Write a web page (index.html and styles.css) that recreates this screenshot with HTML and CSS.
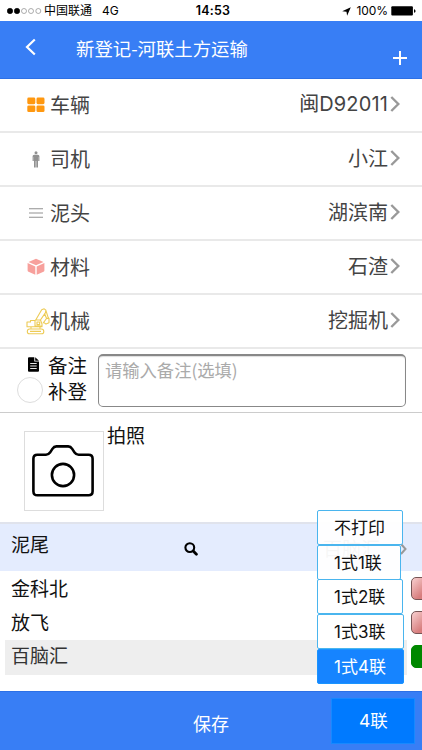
FILE: index.html
```html
<!DOCTYPE html>
<html lang="zh-CN">
<head>
<meta charset="utf-8">
<title>新登记</title>
<link rel="stylesheet" href="styles.css">
</head>
<body>
<div class="app">
  <div class="status">
    <div class="carrier">
      <svg class="dots" width="35" height="8" viewBox="0 0 35 8"><g stroke="#000" stroke-width=".6"><circle cx="3" cy="4" r="2.7"/><circle cx="10" cy="4" r="2.7"/><g fill="none" stroke="#777"><circle cx="17" cy="4" r="2.5"/><circle cx="24" cy="4" r="2.5"/><circle cx="31.3" cy="4" r="2.5"/></g></g></svg>
      <span class="carrier-name">中国联通</span><span class="network">4G</span>
    </div>
    <div class="clock">14:53</div>
    <div class="power">
      <svg class="locate" width="9" height="9" viewBox="0 0 9 9"><path d="M8.8.2 5.1 8.8 4.5 4.7.2 4.2z"/></svg>
      <span class="percent">100%</span>
      <svg width="25" height="10" viewBox="0 0 25 10"><rect x=".3" y=".3" width="21.6" height="9.2" rx="1"/><path d="M23 3.2c2 .3 2 3.3 0 3.6z"/></svg>
    </div>
  </div>
  <header class="header">
    <svg class="back" width="12" height="18" viewBox="0 0 12 18"><path d="M9.8 1.5 2 9l7.8 7.5" fill="none" stroke="#fff" stroke-width="2.2"/></svg>
    <h1 class="title">新登记-河联土方运输</h1>
    <svg class="add" width="14" height="14" viewBox="0 0 14 14"><path d="M7 0v14M0 7h14" stroke="#fff" stroke-width="2"/></svg>
  </header>

  <div class="row">
    <span class="icon"><svg width="18" height="16" viewBox="0 0 18 16" fill="#ff9810"><rect x=".3" y=".5" width="8" height="6.7" rx="1.4"/><rect x="9.5" y=".5" width="8" height="6.7" rx="1.4"/><rect x=".3" y="8.4" width="8" height="6.7" rx="1.4"/><rect x="9.5" y="8.4" width="8" height="6.7" rx="1.4"/></svg></span>
    <span class="label">车辆</span><span class="value">闽<span class="plate">D92011</span></span>
    <svg class="chevron" width="10" height="18" viewBox="0 0 10 18"><path d="m1.3 2 7 7-7 7"/></svg>
  </div>
  <div class="row">
    <span class="icon"><svg width="8" height="17" viewBox="0 0 8 17" fill="#919191"><circle cx="4" cy="1.7" r="1.5"/><path d="M2.1 3.7h3.8Q7.4 3.8 7.4 5.3V10H6.2V6H6v10.5H4.3V10h-.6v6.5H2V6h-.2v4H.6V5.3Q.6 3.8 2.1 3.7z"/></svg></span>
    <span class="label">司机</span><span class="value">小江</span>
    <svg class="chevron" width="10" height="18" viewBox="0 0 10 18"><path d="m1.3 2 7 7-7 7"/></svg>
  </div>
  <div class="row">
    <span class="icon"><svg width="14" height="12" viewBox="0 0 14 12"><path d="M0 1.7h14M0 6h14M0 10.3h14" stroke="#919191" stroke-width="1.1"/></svg></span>
    <span class="label">泥头</span><span class="value">湖滨南</span>
    <svg class="chevron" width="10" height="18" viewBox="0 0 10 18"><path d="m1.3 2 7 7-7 7"/></svg>
  </div>
  <div class="row">
    <span class="icon"><svg width="18" height="18" viewBox="0 0 18 18" fill="#f7a09c"><path d="m9 .8 7.5 3.1L9 7.3 1.5 3.9zM.6 5 8.3 8.5v8.2L1.5 13.7Q.6 13.3.6 12.4zM17.4 5 9.7 8.5v8.2l6.8-3q.9-.4.9-1.3z"/></svg></span>
    <span class="label">材料</span><span class="value">石渣</span>
    <svg class="chevron" width="10" height="18" viewBox="0 0 10 18"><path d="m1.3 2 7 7-7 7"/></svg>
  </div>
  <div class="row">
    <span class="icon digger"><svg width="24" height="27" viewBox="0 0 24 27" fill="none" stroke="#edcb55" stroke-width="1.1" stroke-linejoin="round"><rect x="1.3" y="21" width="16.5" height="4.8" rx="2.4"/><path d="M4 23.4h11M5 18.8v2M14 18.8v2M1 14h3.5v-1.5H9V18h7v.8H1zM9 12h5.5l1.5 4v2.5M11 14h2.7v2.6H11zM10 11.5l5.7-9.7 2.5-1 1.7 1.4-.4 2.4-5.6 8.2M19.8 2.2l2.7 8.5M18.4 5.3l2.3 5.5M20.5 10.5l2.5-.3v4.5l-3 1.4q-1.5-1.3-2.7-1.3z"/></svg></span>
    <span class="label">机械</span><span class="value">挖掘机</span>
    <svg class="chevron" width="10" height="18" viewBox="0 0 10 18"><path d="m1.3 2 7 7-7 7"/></svg>
  </div>

  <section class="notes">
    <div class="note-labels">
      <div class="note-line"><svg class="file" width="11" height="15" viewBox="0 0 11 15"><path d="M1 .2h5.3v4.3H11v9.3q0 1-1 1H1q-1 0-1-1V1.2Q0 .2 1 .2zM7.2.2 11 3.7H7.2z"/><path d="M2.2 6.5h6.5M2.2 9h6.5M2.2 11.5h6.5" stroke="#fff" stroke-width=".9"/></svg>备注</div>
      <div class="note-line"><span class="radio"></span>补登</div>
    </div>
    <div class="textarea">请输入备注(选填)</div>
  </section>

  <section class="photo">
    <div class="camera"><svg width="64" height="54" viewBox="0 0 64 54" fill="none" stroke="#000" stroke-width="2.6"><path d="M6.4 10.8H15q2.5 0 4-2.2l2.4-3.7q1.6-2.5 4-2.5h11.8q2.4 0 4 2.5l2.4 3.7q1.5 2.2 4 2.2h10q4 0 4 4v32.5q0 4-4 4H6.4q-4 0-4-4V14.8q0-4 4-4z"/><circle cx="32" cy="31" r="11.1"/></svg></div>
    <span>拍照</span>
  </section>

  <section class="site">
    <span class="site-label">泥尾</span>
    <svg class="search" width="14" height="14" viewBox="0 0 14 14" fill="none" stroke="#000"><circle cx="5.8" cy="5.6" r="4.4" stroke-width="2.1"/><path d="m9.2 9 3.2 3.2" stroke-width="2.8" stroke-linecap="round"/></svg>
    <span class="site-value">百脑汇</span>
    <svg class="site-arrow" width="7" height="12" viewBox="0 0 7 12"><path d="m1 1 4.5 5L1 11" fill="none" stroke="#999" stroke-width="2"/></svg>
  </section>
  <div class="list">
    <div class="item"><span>金科北</span><i class="tag"></i></div>
    <div class="item"><span>放飞</span><i class="tag"></i></div>
    <div class="item selected"><span>百脑汇</span><i class="tag on"></i></div>
  </div>

  <footer class="footer">
    <div class="save">保存</div>
    <div class="copies">4联</div>
  </footer>

  <div class="menu">
    <div class="option">不打印</div>
    <div class="option narrow">1式1联</div>
    <div class="option">1式2联</div>
    <div class="option wide">1式3联</div>
    <div class="option wide active">1式4联</div>
  </div>
</div>
</body>
</html>
```
FILE: styles.css
```css
* { box-sizing: border-box; }
body {
  margin: 0;
  background: #fff;
  color: #111;
  font-family: "Noto Sans CJK SC", sans-serif;
  font-weight: 400;
  overflow: hidden;
}
svg { display: block; flex: none; }
.app {
  position: relative;
  display: flex;
  flex-direction: column;
  width: 422px;
  height: 750px;
  overflow: hidden;
}
.status {
  display: grid;
  grid-template-columns: 1fr auto 1fr;
  align-items: center;
  height: 21px;
  flex: none;
  padding: 1px 6px 0 7px;
  color: #000;
  font: 400 12px/20px Inter, "Noto Sans CJK SC", sans-serif;
}
.carrier, .power { display: flex; align-items: center; }
.carrier-name { margin-left: 2px; }
.network { margin-left: 10px; }
.clock { font-weight: 600; font-size: 12.5px; letter-spacing: .2px; padding-left: 3px; }
.power { justify-content: flex-end; }
.locate { margin-right: 6px; }
.percent { margin-right: 3px; letter-spacing: -.1px; }
.header {
  display: flex;
  align-items: center;
  flex: none;
  height: 58px;
  padding: 0 15px 2px 25px;
  background: #387ef5;
  border-bottom: 1px solid #2c70e6;
  color: #fff;
}
.back { margin-bottom: 3px; }
.title {
  flex: 1;
  margin: 0 0 2px 39px;
  font-size: 18.4px;
  font-weight: 400;
  line-height: 26px;
}
.add { margin-top: 18px; }
.row {
  display: flex;
  align-items: center;
  flex: none;
  height: 54px;
  padding-right: 22px;
  border-bottom: 2px solid #e9e9e9;
  color: #444;
  font-size: 20px;
  line-height: 30px;
}
.icon {
  display: flex;
  justify-content: center;
  width: 18px;
  margin-left: 27px;
}
.digger { justify-content: flex-start; margin-left: 26px; width: 19px; }
.label { margin-left: 5px; }
.value { margin: 0 2px 3px auto; }
.plate { font-family: Inter, sans-serif; letter-spacing: .15px; }
.chevron { margin-bottom: 2px; fill: none; stroke: #999; stroke-width: 2.4; }
.notes {
  display: flex;
  flex: none;
  height: 64px;
  padding: 3px 16px 4px 17px;
  border-bottom: 1px solid #ccc;
}
.note-labels { width: 81px; font-size: 19.5px; }
.note-line {
  display: flex;
  align-items: center;
  justify-content: flex-end;
  height: 27px;
  margin-top: -1px;
  padding-right: 11px;
  line-height: 27px;
}
.file { margin-right: 9px; }
.radio {
  width: 26px;
  height: 26px;
  margin-right: 5px;
  margin-bottom: 1px;
  border: 1px solid #ddd;
  border-radius: 50%;
}
.textarea {
  flex: 1;
  height: 53px;
  margin-top: 2px;
  padding: 1px 6px;
  border: 1px solid #888;
  border-top: 2px solid #888;
  border-radius: 5px;
  box-shadow: inset 0 1px 1px #ddd;
  color: #aaa;
  font-size: 17.3px;
  font-weight: 400;
  line-height: 26px;
}
.photo {
  display: flex;
  flex: none;
  height: 109px;
  padding: 8px 0 0 24px;
  font-size: 19px;
  line-height: 28px;
}
.camera {
  display: flex;
  align-items: center;
  justify-content: center;
  width: 80px;
  height: 80px;
  margin: 10px 3px 0 0;
  padding: 0 2px 1px 0;
  border: 1px solid #ddd;
}
.site {
  display: flex;
  align-items: center;
  flex: none;
  height: 49px;
  padding: 0 15px 0 11px;
  border-top: 2px solid #e0e3ec;
  background: #e4ecfe;
  font-size: 19px;
  line-height: 28px;
}
.site-label { width: 173px; margin-bottom: 7px; }
.search { margin-top: 3px; }
.site-value { margin: 0 20px 0 auto; color: #555; }
.site-arrow { margin-top: 3px; }
.list {
  flex: 1;
  padding: 1px 0 0 5px;
  font-size: 19px;
}
.item {
  display: flex;
  align-items: center;
  justify-content: space-between;
  height: 34px;
  padding-left: 6px;
  line-height: 34px;
}
.item span { margin-bottom: 3px; }
.item .tag { margin-bottom: 1px; }
.selected {
  height: 35px;
  background: linear-gradient(90deg, #eee 402px, #fff 402px);
  color: #333;
}
.selected span { margin-bottom: 5px; }
.selected .tag { margin-bottom: 3px; }
.tag {
  width: 22px;
  height: 23px;
  margin-right: -11px;
  border: 1px solid #755;
  border-radius: 5px;
  background: linear-gradient(135deg, #f8d0d0, #d77d7d 65%);
}
.on { border-color: #008800; background: #008800; }
.footer {
  display: flex;
  align-items: center;
  flex: none;
  height: 59px;
  border-top: 1px solid #2c70e6;
  background: #387ef5;
  color: #fff;
}
.save { width: 138px; margin-left: 193px; padding-top: 3px; font-size: 18px; line-height: 28px; }
.copies {
  width: 84px;
  height: 46px;
  border: 1px solid #1789ff;
  background: #007aff;
  font: 400 17.5px/44px Inter, "Noto Sans CJK SC", sans-serif;
  padding-left: 27px;
}
.menu {
  position: absolute;
  left: 317px;
  top: 510px;
  width: 88px;
  font: 400 17px/34px Inter, "Noto Sans CJK SC", sans-serif;
}
.option {
  width: 86px;
  height: 35px;
  margin-bottom: -.3px;
  padding-left: 16px;
  border: 1px solid #4ab5ee;
  border-radius: 2px;
  background: rgba(255, 255, 255, .95);
  white-space: nowrap;
}
.narrow { width: 84px; }
.wide { width: 87px; }
.active { background: #1684ff; border-color: #1994ff; color: #fff; }
```
